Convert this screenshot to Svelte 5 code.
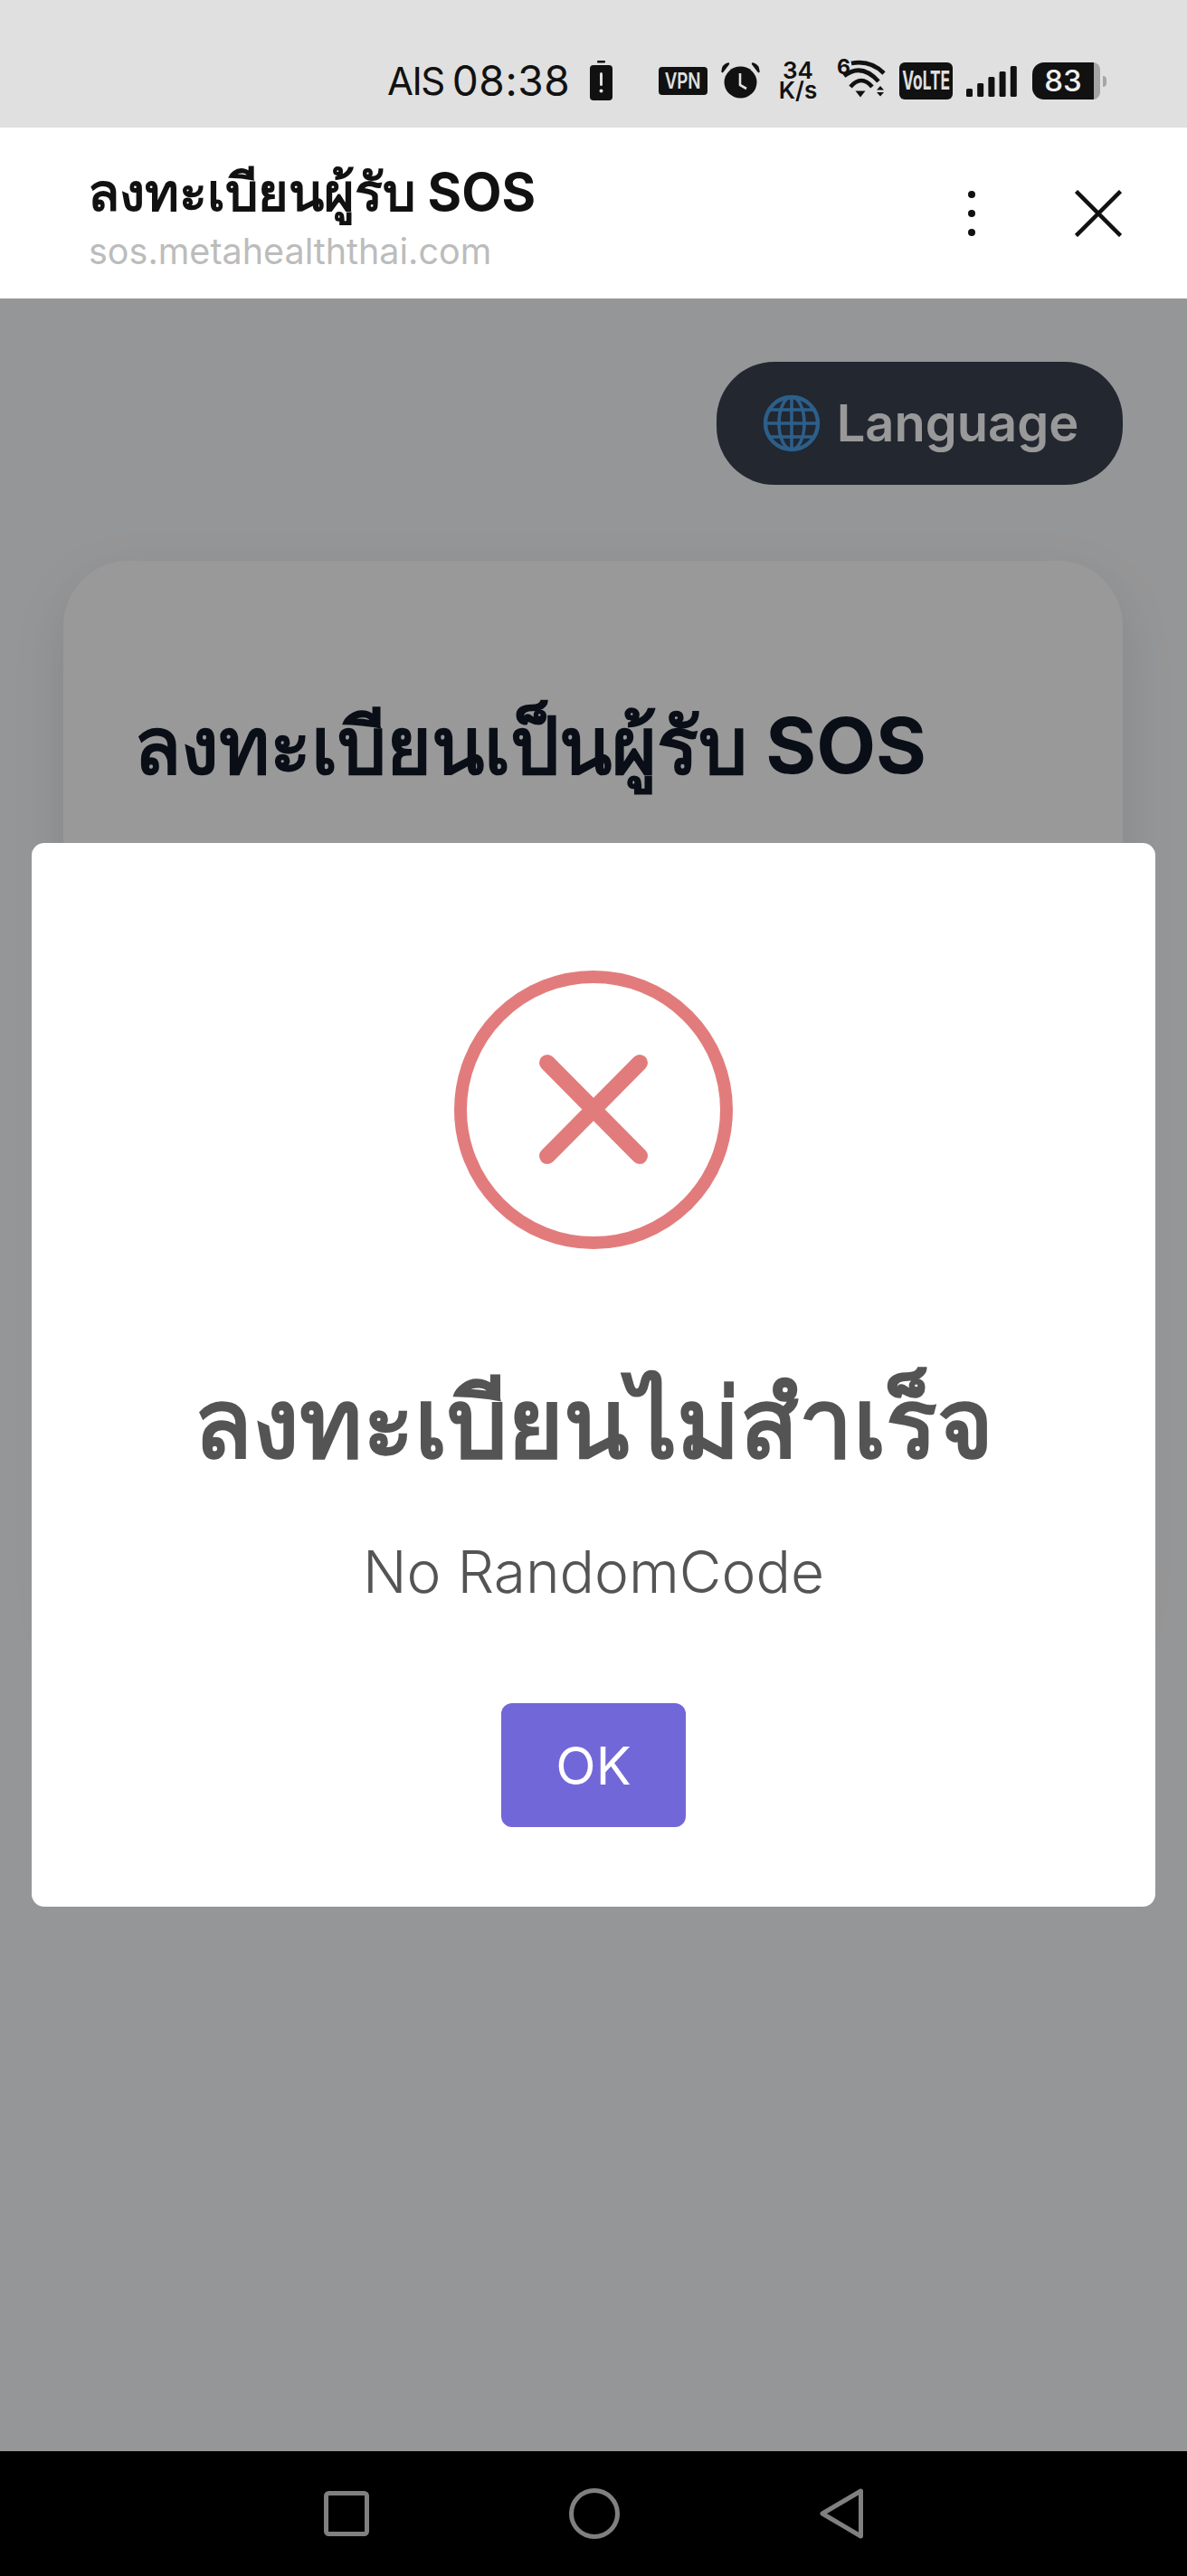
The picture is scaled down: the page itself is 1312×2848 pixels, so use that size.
<script>
  const signalBars = [9, 15, 22, 28, 34];
</script>

<div class="screen">
  <div class="status-bar">
    <div class="status-left">
      <span class="carrier">AIS</span>
      <span class="clock">08:38</span>
      <svg class="battery-alert" width="25" height="44" viewBox="0 0 25 44">
        <rect x="8" y="0" width="9" height="2.5" rx="1" fill="#111" />
        <rect x="0" y="5" width="25" height="39" rx="4" fill="#111" />
        <rect x="11" y="13" width="3" height="15" rx="1.5" fill="#e0e0e0" />
        <circle cx="12.5" cy="33.5" r="2" fill="#e0e0e0" />
      </svg>
    </div>
    <div class="status-right">
      <span class="vpn"><span>VPN</span></span>
      <svg class="alarm" width="43" height="40" viewBox="0 0 43 40">
        <ellipse cx="21.5" cy="22" rx="18" ry="17.5" fill="#111" />
        <path d="M21 12V25L28 29" fill="none" stroke="#e0e0e0" stroke-width="2.6" />
        <path d="M1.5 10Q2 3 8 1.5Z" fill="#111" stroke="#111" stroke-width="2.4" stroke-linejoin="round" />
        <path d="M41.5 10Q41 3 35 1.5Z" fill="#111" stroke="#111" stroke-width="2.4" stroke-linejoin="round" />
      </svg>
      <div class="speed"><span>34</span><span>K/s</span></div>
      <svg class="wifi" width="55" height="59" viewBox="0 -8 55 59">
        <text x="1" y="17" class="wifi-six">6</text>
        <g fill="none" stroke="#111" stroke-width="4.6">
          <path d="M17 5Q38 1 53 16" />
          <path d="M9 19Q28 4 47 25" />
          <path d="M16 31Q28 17 40 31" />
        </g>
        <path d="M21.500 35.500H32.500L27 42.500Z M45 34.500L49 30L53 34.500Z M45 37L53 37L49 41.500Z" fill="#111" />
      </svg>
      <span class="volte"><span>VoLTE</span></span>
      <svg class="signal" width="56" height="35" viewBox="0 0 56 35">
        {#each signalBars as h, i}
          <rect x={i * 12.2} y={35 - h} width="7" height={h} rx="1.5" fill="#111" />
        {/each}
      </svg>
      <div class="battery"><span class="level">83</span></div>
    </div>
  </div>

  <header class="app-bar">
    <div class="titles">
      <div class="page-title">ลงทะเบียนผู้รับ SOS</div>
      <div class="page-url">sos.metahealththai.com</div>
    </div>
    <svg class="more" width="10" height="52" viewBox="0 0 10 52">
      <circle cx="5" cy="5" r="4" />
      <circle cx="5" cy="26" r="4" />
      <circle cx="5" cy="47" r="4" />
    </svg>
    <svg class="close" width="52" height="52" viewBox="0 0 52 52">
      <path d="M1.500 1.500L50.500 50.500M50.500 1.500L1.500 50.500" />
    </svg>
  </header>

  <main class="page">
    <div class="lang-row">
      <button class="lang-btn">
        <svg width="64" height="64" viewBox="0 0 64 64" fill="none" stroke="#4a9ee6" stroke-width="3.6">
          <circle cx="32" cy="32" r="29" stroke-width="4.4" />
          <ellipse cx="32" cy="32" rx="14" ry="29" />
          <path d="M32 3V61M3 32H61M8 17H56M8 47H56" />
        </svg>
        Language
      </button>
    </div>
    <section class="card">
      <h1>ลงทะเบียนเป็นผู้รับ SOS</h1>
    </section>

    <div class="overlay">
      <div class="modal">
        <svg class="error-icon" width="308" height="310" viewBox="0 0 308 310">
          <circle cx="154" cy="155" r="147" />
          <path d="M103 103L205 206M205 103L103 206" />
        </svg>
        <h2>ลงทะเบียนไม่สำเร็จ</h2>
        <p>No RandomCode</p>
        <button class="ok">OK</button>
      </div>
    </div>
  </main>

  <nav class="nav-bar">
    <svg width="50" height="50" viewBox="0 0 50 50"><rect x="2.500" y="2.500" width="45" height="45" rx="3" /></svg>
    <svg width="56" height="56" viewBox="0 0 56 56"><circle cx="28" cy="28" r="25.500" /></svg>
    <svg width="48" height="56" viewBox="0 0 48 56"><path d="M45.500 3L3 28L45.500 53Z" /></svg>
  </nav>
</div>

<style>
  :global(body) {
    margin: 0;
    background: #000;
  }

  .screen {
    width: 1312px;
    height: 2848px;
    display: flex;
    flex-direction: column;
    overflow: hidden;
    font-family: Inter, "Noto Sans", sans-serif;
  }

  .status-bar {
    height: 141px;
    flex: none;
    box-sizing: border-box;
    background: #e0e0e0;
    color: #111;
    padding: 66px 89px 0 428px;
    display: flex;
    justify-content: space-between;
    align-items: flex-start;
  }

  .status-left {
    display: flex;
    align-items: center;
    height: 46px;
  }

  .carrier {
    font-size: 42px;
    letter-spacing: -1.5px;
    margin-right: 9px;
  }

  .clock {
    font-size: 46px;
    letter-spacing: 0.6px;
    margin-right: 22px;
  }

  .status-right {
    display: flex;
    align-items: center;
    height: 46px;
    gap: 15px;
    margin-left: -2px;
  }

  .vpn {
    width: 54px;
    height: 31px;
    border-radius: 4px;
    background: #111;
    color: #e0e0e0;
    font-size: 24px;
    font-weight: 600;
    display: flex;
    align-items: center;
    justify-content: center;
  }

  .vpn span {
    transform: scaleX(0.78);
  }

  .speed {
    width: 46px;
    margin: 0 4px;
    display: flex;
    flex-direction: column;
    align-items: center;
    font-size: 26px;
    line-height: 22px;
    font-weight: 600;
  }

  .wifi {
    margin: -6px 0 0;
  }

  .wifi-six {
    font-size: 23px;
    font-weight: 700;
    font-family: Inter, sans-serif;
    fill: #111;
  }

  .volte {
    width: 59px;
    height: 41px;
    border-radius: 6px;
    background: #111;
    color: #e0e0e0;
    font-size: 28px;
    font-weight: 700;
    display: flex;
    align-items: center;
    justify-content: center;
  }

  .volte span {
    transform: scaleX(0.62);
  }

  .battery {
    position: relative;
    width: 75px;
    height: 41px;
    margin: 0 7px 0 2px;
    border-radius: 13px 8px 8px 13px;
    background: linear-gradient(to right, #111 68px, #a5a5a5 68px);
    color: #eee;
    box-sizing: border-box;
    padding-right: 7px;
    display: flex;
    align-items: center;
    justify-content: center;
  }

  .battery::after {
    content: "";
    position: absolute;
    left: 78px;
    top: 15px;
    width: 4px;
    height: 12px;
    border-radius: 0 6px 6px 0;
    background: #a5a5a5;
  }

  .level {
    font-size: 33px;
    font-weight: 500;
  }

  .app-bar {
    height: 189px;
    flex: none;
    box-sizing: border-box;
    background: #fff;
    padding: 0 72px 0 99px;
    display: flex;
    align-items: center;
  }

  .titles {
    flex: 1;
    padding-top: 9px;
  }

  .page-title {
    font-size: 57.5px;
    line-height: 76px;
    font-weight: 700;
    color: #111;
    margin-left: -2px;
  }

  .page-url {
    font-size: 39.5px;
    line-height: 56px;
    color: #bcbcbc;
    margin-left: -1px;
  }

  .more {
    fill: #111;
    margin-right: 109px;
  }

  .close {
    stroke: #111;
    stroke-width: 4.5;
  }

  .page {
    position: relative;
    flex: 1;
    background: #f9fafc;
    padding: 70px 71px 0 70px;
  }

  .lang-row {
    display: flex;
    justify-content: flex-end;
  }

  .lang-btn {
    width: 449px;
    height: 136px;
    border: 0;
    border-radius: 64px;
    background: #3a4150;
    color: #fff;
    font-family: inherit;
    font-size: 56px;
    font-weight: 600;
    padding: 0 0 0 2px;
    display: flex;
    align-items: center;
    justify-content: center;
    gap: 18px;
  }

  .card {
    margin-top: 84px;
    height: 1200px;
    box-sizing: border-box;
    padding: 154px 78px;
    background: #fff;
    border-radius: 72px;
    box-shadow: 0 20px 60px rgba(0, 0, 0, 0.1);
  }

  h1 {
    margin: 0;
    font-size: 85.5px;
    line-height: 100px;
    font-weight: 700;
    color: #111827;
  }

  .overlay {
    position: absolute;
    inset: 0;
    background: rgba(0, 0, 0, 0.4);
    display: flex;
    align-items: center;
    justify-content: center;
  }

  .modal {
    width: 1242px;
    height: 1176px;
    box-sizing: border-box;
    padding-top: 140px;
    background: #fff;
    border-radius: 14px;
    display: flex;
    flex-direction: column;
    align-items: center;
  }

  .error-icon {
    fill: none;
    stroke: #e27c7c;
  }

  .error-icon circle {
    stroke-width: 14;
  }

  .error-icon path {
    stroke-width: 18;
    stroke-linecap: round;
  }

  h2 {
    margin: 126px 0 0;
    font-size: 106px;
    line-height: 130px;
    font-weight: 700;
    color: #545454;
  }

  p {
    margin: 60px 0 0;
    font-size: 64px;
    line-height: 80px;
    font-weight: 300;
    color: #545454;
  }

  .ok {
    margin-top: 105px;
    width: 204px;
    height: 137px;
    border: 0;
    border-radius: 12px;
    background: #7267d8;
    color: #fff;
    font-family: inherit;
    font-size: 58px;
  }

  .nav-bar {
    height: 138px;
    flex: none;
    background: #000;
    box-sizing: border-box;
    padding: 0 358px 0 358px;
    display: flex;
    align-items: center;
    justify-content: space-between;
  }

  .nav-bar svg {
    fill: none;
    stroke: #808080;
    stroke-width: 5;
    stroke-linejoin: round;
  }
</style>
